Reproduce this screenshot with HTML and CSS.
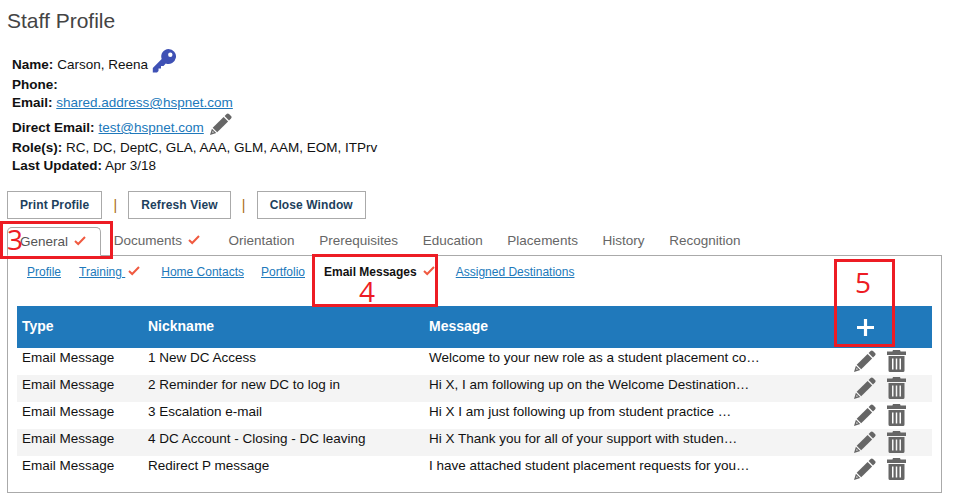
FILE: index.html
```html
<!DOCTYPE html>
<html lang="en">
<head>
<meta charset="utf-8">
<title>Staff Profile</title>
<link rel="stylesheet" href="styles.css">
</head>
<body>
<svg class="defs" width="0" height="0" aria-hidden="true">
  <symbol id="pencil" viewBox="0 0 22 22">
    <path d="M16.600 1a1.700 1.700 0 0 1 2.400 0l2 2a1.700 1.700 0 0 1 0 2.400l-2 2-4.400-4.400z"/>
    <path d="M13.600 3.900l4.500 4.500L7.200 19.300l-4.500-4.500z"/>
    <path fill-rule="evenodd" d="M1.900 15.700l4.400 4.400L0 22zM2.700 18l-.5 1.800 1.800-.5z"/>
  </symbol>
  <symbol id="trash" viewBox="0 0 19 22">
    <path d="M6 0h7l.6 1.500H19V5H0V1.500h5.400z"/>
    <path fill-rule="evenodd" d="M1.500 6h16v14.500a1.500 1.500 0 0 1-1.500 1.500H3a1.500 1.500 0 0 1-1.500-1.500zM5 8.500v11h1.500v-11zM8.750 8.500v11h1.500v-11zM12.500 8.500v11H14v-11z"/>
  </symbol>
  <symbol id="check" viewBox="0 0 12 10">
    <path d="M1 5.500l3.200 3L11 1.500" fill="none" stroke="currentColor" stroke-width="2"/>
  </symbol>
</svg>

<h1 class="title">Staff Profile</h1>

<div class="info">
  <div class="line line-name"><b>Name:</b> Carson, Reena
    <svg class="key" viewBox="0 0 24 24"><path fill-rule="evenodd" d="M16.500 0a7.500 7.500 0 1 1-2.700 14.500L11.500 17H9v2.500H6.500V22l-1.500 1.500H.8V19L9.700 10.100A7.500 7.500 0 0 1 16.500 0zm1.800 3.500a2.200 2.200 0 1 0 0 4.400 2.200 2.200 0 0 0 0-4.400z"/></svg>
  </div>
  <div class="line"><b>Phone:</b></div>
  <div class="line"><b>Email:</b> <a href="#">shared.address@hspnet.com</a></div>
  <div class="line line-direct"><b>Direct Email:</b> <a href="#">test@hspnet.com</a>
    <svg class="icon-pencil"><use href="#pencil"/></svg>
  </div>
  <div class="line"><b>Role(s):</b> RC, DC, DeptC, GLA, AAA, GLM, AAM, EOM, ITPrv</div>
  <div class="line"><b>Last Updated:</b> Apr 3/18</div>
</div>

<div class="actions">
  <button class="btn" type="button">Print Profile</button>
  <span class="sep">|</span>
  <button class="btn" type="button">Refresh View</button>
  <span class="sep">|</span>
  <button class="btn" type="button">Close Window</button>
</div>

<nav class="tabs">
  <span class="tab active">General <svg class="check"><use href="#check"/></svg></span>
  <span class="tab tab-docs">Documents <svg class="check"><use href="#check"/></svg></span>
  <span class="tab">Orientation</span>
  <span class="tab">Prerequisites</span>
  <span class="tab">Education</span>
  <span class="tab">Placements</span>
  <span class="tab">History</span>
  <span class="tab">Recognition</span>
</nav>

<section class="panel">
  <nav class="subtabs">
    <a href="#">Profile</a>
    <span class="sub-check"><a href="#">Training&nbsp;</a><svg class="check"><use href="#check"/></svg></span>
    <a class="sub-home" href="#">Home Contacts</a>
    <a class="sub-portfolio" href="#">Portfolio</a>
    <span class="sub-check current"><b>Email Messages</b><svg class="check"><use href="#check"/></svg></span>
    <a href="#">Assigned Destinations</a>
  </nav>

  <div class="table">
    <div class="row head">
      <div class="c-type">Type</div>
      <div class="c-nick">Nickname</div>
      <div class="c-msg">Message</div>
      <div class="c-act"><svg class="plus" viewBox="0 0 16 16"><path d="M6.500 0h3v6.500H16v3H9.500V16h-3V9.500H0v-3h6.500z"/></svg></div>
    </div>
    <div class="row">
      <div class="c-type">Email Message</div>
      <div class="c-nick">1 New DC Access</div>
      <div class="c-msg">Welcome to your new role as a student placement co…</div>
      <div class="c-act"><svg class="icon-pencil"><use href="#pencil"/></svg><svg class="icon-trash"><use href="#trash"/></svg></div>
    </div>
    <div class="row">
      <div class="c-type">Email Message</div>
      <div class="c-nick">2 Reminder for new DC to log in</div>
      <div class="c-msg">Hi X, I am following up on the Welcome Destination…</div>
      <div class="c-act"><svg class="icon-pencil"><use href="#pencil"/></svg><svg class="icon-trash"><use href="#trash"/></svg></div>
    </div>
    <div class="row">
      <div class="c-type">Email Message</div>
      <div class="c-nick">3 Escalation e-mail</div>
      <div class="c-msg">Hi X I am just following up from student practice …</div>
      <div class="c-act"><svg class="icon-pencil"><use href="#pencil"/></svg><svg class="icon-trash"><use href="#trash"/></svg></div>
    </div>
    <div class="row">
      <div class="c-type">Email Message</div>
      <div class="c-nick">4 DC Account - Closing - DC leaving</div>
      <div class="c-msg">Hi X Thank you for all of your support with studen…</div>
      <div class="c-act"><svg class="icon-pencil"><use href="#pencil"/></svg><svg class="icon-trash"><use href="#trash"/></svg></div>
    </div>
    <div class="row">
      <div class="c-type">Email Message</div>
      <div class="c-nick">Redirect P message</div>
      <div class="c-msg">I have attached student placement requests for you…</div>
      <div class="c-act"><svg class="icon-pencil"><use href="#pencil"/></svg><svg class="icon-trash"><use href="#trash"/></svg></div>
    </div>
  </div>
</section>

<div class="mark mark-3"><span>3</span></div>
<div class="mark mark-4"><span>4</span></div>
<div class="mark mark-5"><span>5</span></div>
</body>
</html>
```
FILE: styles.css
```css
* { box-sizing: border-box; }
html, body { margin: 0; padding: 0; }
body {
  position: relative;
  width: 960px;
  height: 496px;
  overflow: hidden;
  background: #fff;
  font-family: "Liberation Sans", Arial, sans-serif;
  font-size: 13.5px;
  color: #111;
}
a { color: #2079bb; }
.defs { position: absolute; }

.title {
  margin: 0;
  padding: 10px 0 0 7px;
  height: 53px;
  font-size: 21px;
  line-height: 22px;
  font-weight: 400;
  color: #444;
}

.info { padding: 0 0 0 12px; }
.line { height: 18px; line-height: 18px; white-space: nowrap; }
.line-name { height: 23px; line-height: 23px; display: flex; gap: 4px; align-items: center; }
.line-direct { height: 27px; line-height: 22px; padding-top: 5px; display: flex; gap: 4px; align-items: center; }
.key { width: 24px; height: 24px; fill: #3f51b5; margin-top: -7px; }
.icon-pencil { width: 22px; height: 22px; fill: #666; }
.line-direct .icon-pencil { margin-left: 2px; margin-top: -9px; }

.actions {
  display: flex;
  align-items: center;
  margin: 16px 0 0 7px;
  height: 28px;
}
.btn {
  height: 28px;
  padding: 0 12px;
  background: #fff;
  border: 1px solid #aaa;
  font: 700 12px "Liberation Sans", Arial, sans-serif;
  letter-spacing: .1px;
  color: #1d3f5c;
}
.sep { width: 26px; text-align: center; color: #a9690f; font-size: 14px; }

.tabs {
  display: flex;
  margin: 8px 0 0 7px;
  height: 28px;
  color: #666;
}
.tab {
  height: 28px;
  padding: 5px 12px 0 12.700px;
  line-height: 17px;
  white-space: nowrap;
}
.tab.active {
  width: 94px;
  height: 29px;
  color: #555;
  background: #fff;
  border: 1px solid #aaa;
  border-bottom: 1px solid #fff;
  border-radius: 5px 5px 0 0;
  position: relative;
  z-index: 1;
  padding-left: 12px;
}
.check { width: 12px; height: 11px; color: #f05a40; margin-left: 2px; }
.tab-docs .check { margin-right: 4px; }

.panel {
  margin: 0 0 0 7px;
  width: 935px;
  height: 238px;
  border: 1px solid #aaa;
  padding: 0 9px;
}
.subtabs {
  display: flex;
  align-items: center;
  height: 50px;
  padding: 0 0 18px 10px;
  gap: 18px;
  font-size: 12px;
  white-space: nowrap;
}
.subtabs b { color: #111; }
.sub-check { margin-right: 3px; }
.sub-home { margin-right: -1px; }
.sub-portfolio { margin-right: 1px; }
.sub-check .check { margin-left: 3px; }
.current .check { margin-left: 6px; }

.row {
  display: flex;
  height: 27px;
  line-height: 17px;
  padding-top: 1px;
  white-space: nowrap;
}
.row:nth-child(odd):not(.head) { background: #f4f4f4; }
.row.head {
  height: 42px;
  background: #2079bb;
  color: #fff;
  font-size: 14px;
  font-weight: 700;
  align-items: center;
  padding: 0 0 2px;
}
.c-type { width: 126px; padding-left: 5px; }
.c-nick { width: 281px; padding-left: 5px; }
.c-msg { width: 419px; padding-left: 5px; }
.c-act { display: flex; gap: 11px; padding-left: 11px; align-items: flex-start; }
.head .c-act { padding: 2px 0 0 14px; }
.plus { width: 17px; height: 17px; fill: #fff; display: block; }
.c-act .icon-pencil { margin-top: 1px; }
.icon-trash { width: 19px; height: 22px; fill: #666; margin-top: 1px; }

.mark {
  position: absolute;
  z-index: 2;
  border: 3px solid #ed1c24;
  color: #ed1c24;
  font-family: "Open Sans", sans-serif;
  pointer-events: none;
}
.mark span { position: absolute; line-height: 20px; font-size: 28px; }
.mark-3 { left: 0; top: 221px; width: 113px; height: 38px; }
.mark-3 span { left: 4px; top: 5px; }
.mark-4 { left: 312px; top: 254px; width: 126px; height: 53px; }
.mark-4 span { left: 44px; top: 24px; }
.mark-5 { left: 834px; top: 259px; width: 61px; height: 88px; }
.mark-5 span { left: 18px; top: 10px; }
```
